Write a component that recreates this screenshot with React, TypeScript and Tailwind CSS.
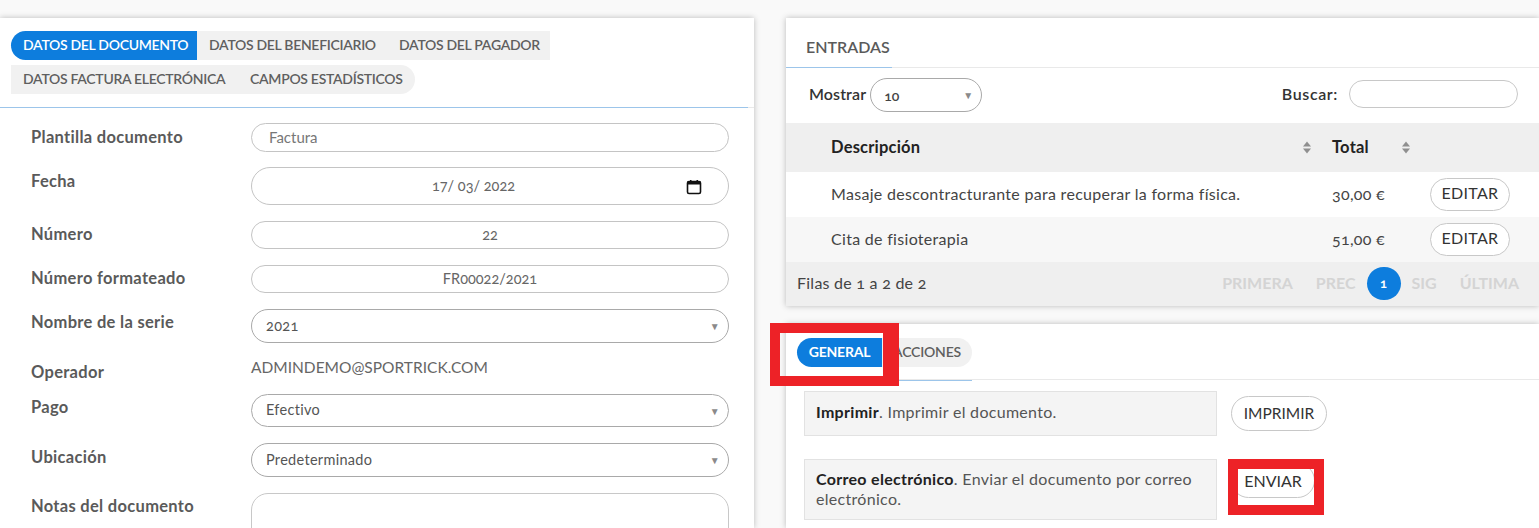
import React from 'react'

const font = "font-['Lato','Noto_Sans',sans-serif]"

function Caret() {
  return <span className="absolute right-[8px] top-1/2 -translate-y-1/2 text-[10px] leading-none text-[#8a8a8a]">▼</span>
}

function SelectBox({ value, h }: { value: string; h: string }) {
  return (
    <div className={`relative flex w-full items-center rounded-[17px] border border-[#a9a9a9] bg-white pb-[1px] pl-[14px] text-[14.5px] tracking-[0.3px] text-[#555] ${h}`}>
      {value}
      <Caret />
    </div>
  )
}

function FormRow({ label, labelTop, className, children }: { label: string; labelTop: string; className: string; children: React.ReactNode }) {
  return (
    <div className={`flex ${className}`}>
      <div className={`w-[220px] shrink-0 text-[16.5px] leading-[20px] font-bold tracking-[0.3px] text-[#5a5a5a] ${labelTop}`}>{label}</div>
      <div className="w-[478px]">{children}</div>
    </div>
  )
}

function Tab({ label, active, className }: { label: string; active?: boolean; className: string }) {
  return (
    <div className={`flex h-[29px] items-center pb-[2px] pl-[12px] text-[14px] font-semibold tracking-[-0.3px] ${active ? 'bg-[#0d7ddd] text-white' : 'bg-[#f1f1f1] text-[#5f5f5f]'} ${className}`}>
      {label}
    </div>
  )
}

function SortIcon() {
  return (
    <svg width="10" height="13" viewBox="0 0 10 13" fill="#8f8f8f">
      <path d="M5 0.5 9 5.5H1z" />
      <path d="M5 12.5 1 7.5H9z" />
    </svg>
  )
}

function EditButton() {
  return (
    <button className="flex h-[33px] w-[80px] items-center justify-center rounded-[17px] border border-[#c8c8c8] bg-white pb-[3px] text-[16px] text-[#333]">
      EDITAR
    </button>
  )
}

function Pager({ label }: { label: string }) {
  return <span className="mb-[3px] block text-[16px] font-bold text-[#d4d4d4]">{label}</span>
}

function LeftCard() {
  return (
    <div className="h-[510px] w-[754px] overflow-hidden bg-white shadow-[0_0_6px_rgba(0,0,0,0.25)]">
      <div className="px-[11px] pt-[13px]">
        <div className="flex">
          <Tab label="DATOS DEL DOCUMENTO" active className="w-[186px] rounded-l-[15px]" />
          <Tab label="DATOS DEL BENEFICIARIO" className="w-[190px]" />
          <Tab label="DATOS DEL PAGADOR" className="w-[163px]" />
        </div>
        <div className="mt-[5px] flex">
          <Tab label="DATOS FACTURA ELECTRÓNICA" className="w-[227px]" />
          <Tab label="CAMPOS ESTADÍSTICOS" className="w-[177px] rounded-r-[15px]" />
        </div>
      </div>
      <div className="mt-[13px] h-px bg-[#e9e9e9]">
        <div className="h-px w-[748px] bg-[#9cc5ea]" />
      </div>
      <div className="pl-[31px]">
        <FormRow label="Plantilla documento" labelTop="pt-[4px]" className="mt-[15px]">
          <div className="flex h-[29px] items-center rounded-[15px] border border-[#c4c4c4] pl-[17px] text-[15px] text-[#777]">Factura</div>
        </FormRow>
        <FormRow label="Fecha" labelTop="pt-[4px]" className="mt-[15px]">
          <div className="relative flex h-[38px] items-center justify-center rounded-[19px] border border-[#c4c4c4] pr-[33px] text-[14.5px] text-[#666]">
            17/ 03/ 2022
            <svg className="absolute right-[26px] top-[11px]" width="16" height="16" viewBox="0 0 16 16" fill="none">
              <rect x="1.5" y="2.5" width="13" height="12" rx="1.5" stroke="#111" strokeWidth="1.6" />
              <rect x="1.5" y="2.5" width="13" height="3" fill="#111" />
              <rect x="4" y="1" width="1.5" height="2" fill="#111" />
              <rect x="10.5" y="1" width="1.5" height="2" fill="#111" />
            </svg>
          </div>
        </FormRow>
        <FormRow label="Número" labelTop="pt-[3px]" className="mt-[16px]">
          <div className="flex h-[28px] items-center justify-center rounded-[14px] border border-[#c4c4c4] text-[14.5px] text-[#666]">22</div>
        </FormRow>
        <FormRow label="Número formateado" labelTop="pt-[3px]" className="mt-[16px]">
          <div className="flex h-[28px] items-center justify-center rounded-[14px] border border-[#c4c4c4] text-[14.5px] text-[#666]">FR00022/2021</div>
        </FormRow>
        <FormRow label="Nombre de la serie" labelTop="pt-[3px]" className="mt-[16px]">
          <SelectBox value="2021" h="h-[34px]" />
        </FormRow>
        <FormRow label="Operador" labelTop="pt-[9px]" className="mt-[10px] h-[41px]">
          <div className="pt-[4px] text-[15.5px] leading-[20px] text-[#666]">ADMINDEMO@SPORTRICK.COM</div>
        </FormRow>
        <FormRow label="Pago" labelTop="pt-[3px]" className="mt-[0px]">
          <SelectBox value="Efectivo" h="h-[33px]" />
        </FormRow>
        <FormRow label="Ubicación" labelTop="pt-[4px]" className="mt-[16px]">
          <SelectBox value="Predeterminado" h="h-[34px]" />
        </FormRow>
        <FormRow label="Notas del documento" labelTop="pt-[3px]" className="mt-[16px]">
          <div className="h-[80px] rounded-[17px] border border-[#c8c8c8]" />
        </FormRow>
      </div>
    </div>
  )
}

function TableCard() {
  return (
    <div className="h-[288px] bg-white shadow-[0_0_6px_rgba(0,0,0,0.25)]">
      <div className="relative h-[50px] border-b border-[#e9e9e9]">
        <div className="pl-[20px] pt-[19px] text-[16px] leading-[20px] font-semibold text-[#5a5a5a]">ENTRADAS</div>
        <div className="absolute bottom-[-1px] left-0 h-px w-[106px] bg-[#9cc5ea]" />
      </div>
      <div className="flex h-[55px] items-center pb-[1px] pl-[23px] pr-[21px]">
        <span className="mb-[3px] text-[16px] font-semibold tracking-[0.1px] text-[#333]">Mostrar</span>
        <div className="relative ml-[4px] flex h-[34px] w-[112px] items-center rounded-[17px] border border-[#a9a9a9] pl-[13px] text-[14px] font-semibold text-[#444]">
          10
          <Caret />
        </div>
        <span className="mb-[3px] ml-auto text-[16px] font-semibold tracking-[0.6px] text-[#333]">Buscar:</span>
        <div className="mb-[2px] ml-[11px] h-[28px] w-[169px] rounded-[14px] border border-[#c8c8c8]" />
      </div>
      <div className="flex h-[49px] items-center bg-[#efefef] pl-[45px] text-[16.5px] font-bold tracking-[0.2px] text-[#222]">
        <span className="w-[471px]">Descripción</span>
        <SortIcon />
        <span className="ml-[20px] w-[69px]">Total</span>
        <SortIcon />
      </div>
      <div className="flex h-[45px] items-center bg-white pl-[45px] text-[16px] tracking-[0.3px] text-[#444]">
        <span className="mb-[2px] w-[501px]">Masaje descontracturante para recuperar la forma física.</span>
        <span className="mb-[2px] w-[98px]">30,00 €</span>
        <EditButton />
      </div>
      <div className="flex h-[45px] items-center bg-[#f7f7f7] pl-[45px] text-[16px] tracking-[0.3px] text-[#444]">
        <span className="mb-[2px] w-[501px]">Cita de fisioterapia</span>
        <span className="mb-[2px] w-[98px]">51,00 €</span>
        <EditButton />
      </div>
      <div className="flex h-[44px] items-center bg-[#efefef] pl-[11px] pr-[20px] text-[16px] tracking-[0.25px] text-[#444]">
        <span className="mb-[2px]">Filas de 1 a 2 de 2</span>
        <div className="ml-auto flex items-center tracking-normal">
          <Pager label="PRIMERA" />
          <span className="ml-[23px]"><Pager label="PREC" /></span>
          <span className="ml-[11px] mb-[1px] flex h-[33px] w-[34px] items-center justify-center rounded-full bg-[#0d7ddd] text-[13px] font-bold text-white">1</span>
          <span className="ml-[11px]"><Pager label="SIG" /></span>
          <span className="ml-[23px]"><Pager label="ÚLTIMA" /></span>
        </div>
      </div>
    </div>
  )
}

function ActionRow({ title, text, className, boxClass, children }: { title: string; text: string; className: string; boxClass: string; children: React.ReactNode }) {
  return (
    <div className={`flex items-start ${className}`}>
      <div className={`w-[413px] border border-[#e2e2e2] bg-[#f4f4f4] px-[11px] text-[16px] leading-[20px] tracking-[0.3px] text-[#555] ${boxClass}`}>
        <b className="font-bold text-[#222]">{title}</b>. {text}
      </div>
      {children}
    </div>
  )
}

function ActionsCard() {
  return (
    <div className="relative h-[204px] bg-white shadow-[0_0_6px_rgba(0,0,0,0.25)]">
      <div className="h-[56px] border-b border-[#e9e9e9] pl-[11px] pt-[14px]">
        <div className="flex">
          <div className="flex h-[29px] w-[85px] items-center justify-center rounded-l-[15px] bg-[#0d7ddd] pb-[2px] text-[14px] font-bold tracking-[-0.2px] text-white">GENERAL</div>
          <div className="flex h-[29px] w-[90px] items-center justify-center rounded-r-[15px] bg-[#f1f1f1] pb-[2px] text-[14px] font-semibold tracking-[-0.2px] text-[#5f5f5f]">ACCIONES</div>
        </div>
      </div>
      <div className="absolute left-0 top-[56px] h-px w-[186px] bg-[#9cc5ea]" />
      <div className="pl-[18px]">
        <ActionRow title="Imprimir" text="Imprimir el documento." className="mt-[11px]" boxClass="h-[45px] pt-[10px]">
          <button className="ml-[14px] mt-[5px] flex h-[35px] w-[96px] items-center justify-center rounded-[18px] border border-[#c8c8c8] bg-white text-[15.5px] text-[#333]">IMPRIMIR</button>
        </ActionRow>
        <ActionRow title="Correo electrónico" text="Enviar el documento por correo electrónico." className="mt-[23px]" boxClass="h-[61px] pt-[9px]">
          <button className="ml-[14px] mt-[4px] flex h-[35px] w-[84px] items-center justify-center rounded-[18px] border border-[#c8c8c8] bg-white text-[16px] text-[#333]">ENVIAR</button>
        </ActionRow>
      </div>
      {/* marcas rojas de la captura */}
      <div className="pointer-events-none absolute left-[-16px] top-[-1px] h-[63px] w-[129px] border-[10px] border-r-[16px] border-[#ed2227]" />
      <div className="pointer-events-none absolute left-[442px] top-[135px] h-[56px] w-[96px] border-[10px] border-[#ed2227]" />
    </div>
  )
}

export default function App() {
  return (
    <div className={`flex h-[528px] w-[1539px] overflow-hidden bg-[#f9f9f9] pt-[18px] oldstyle-nums ${font}`}>
      <LeftCard />
      <div className="ml-[32px] flex w-[753px] flex-col gap-[18px]">
        <TableCard />
        <ActionsCard />
      </div>
    </div>
  )
}
